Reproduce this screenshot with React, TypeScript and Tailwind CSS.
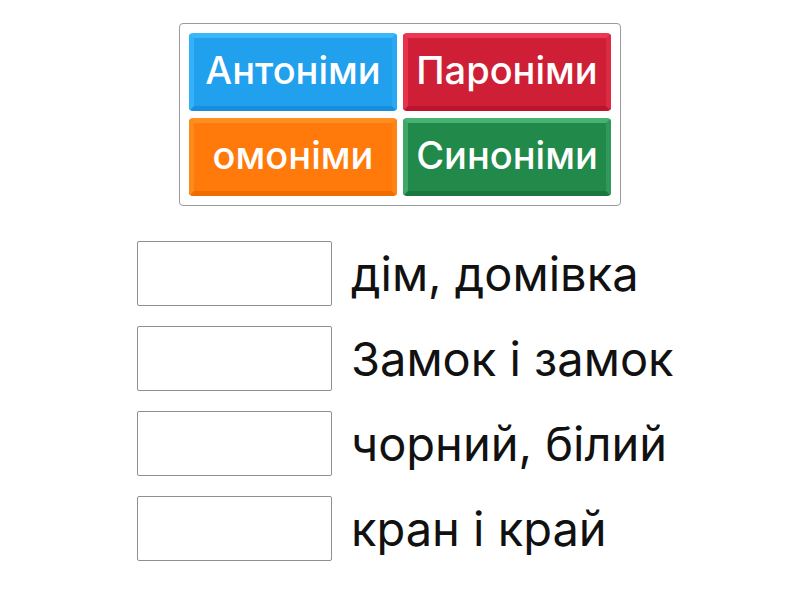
import React from 'react';

const tiles = [
  { label: 'Антоніми', cls: 'bg-[#21a0ee] border-t-[#3cb6fb] border-l-[#36b0f8] border-r-[#2aa8f3] border-b-[#1a8edc]' },
  { label: 'Пароніми', cls: 'bg-[#cf1f37] border-t-[#ec3852] border-l-[#e6324b] border-r-[#dc2a42] border-b-[#bd142c]' },
  { label: 'омоніми', cls: 'bg-[#ff7a0b] border-t-[#ff8e22] border-l-[#ff8a1c] border-r-[#ff8314] border-b-[#ef6d00]' },
  { label: 'Синоніми', cls: 'bg-[#218a4b] border-t-[#47b271] border-l-[#3fa866] border-r-[#2f985a] border-b-[#19783f]' },
];

const rows = ['дім, домівка', 'Замок і замок', 'чорний, білий', 'кран і край'];

export default function App() {
  return (
    <div className="w-[800px] h-[600px] bg-white flex flex-col items-center pt-[23px]" style={{ fontFamily: 'Inter, "Noto Sans", sans-serif' }}>
      <div className="w-[442px] border border-[#9a9a9a] rounded-[4px] p-[9px] grid grid-cols-2 gap-x-[6px] gap-y-[7px]">
        {tiles.map((t) => (
          <div key={t.label}
            className={`h-[78px] rounded-[4px] border-[5px] pb-[5px] flex items-center justify-center text-white text-[38px] font-medium leading-none ${t.cls}`}>
            {t.label}
          </div>
        ))}
      </div>
      <div className="mt-[35px] w-[526px] flex flex-col gap-[20px]">
        {rows.map((r) => (
          <div key={r} className="flex items-center">
            <div className="w-[195px] h-[65px] border border-[#8f8f8f] rounded-[2px] bg-white shrink-0" />
            <div className="ml-[19px] text-[47px] leading-none text-[#111] whitespace-nowrap">{r}</div>
          </div>
        ))}
      </div>
    </div>
  );
}
